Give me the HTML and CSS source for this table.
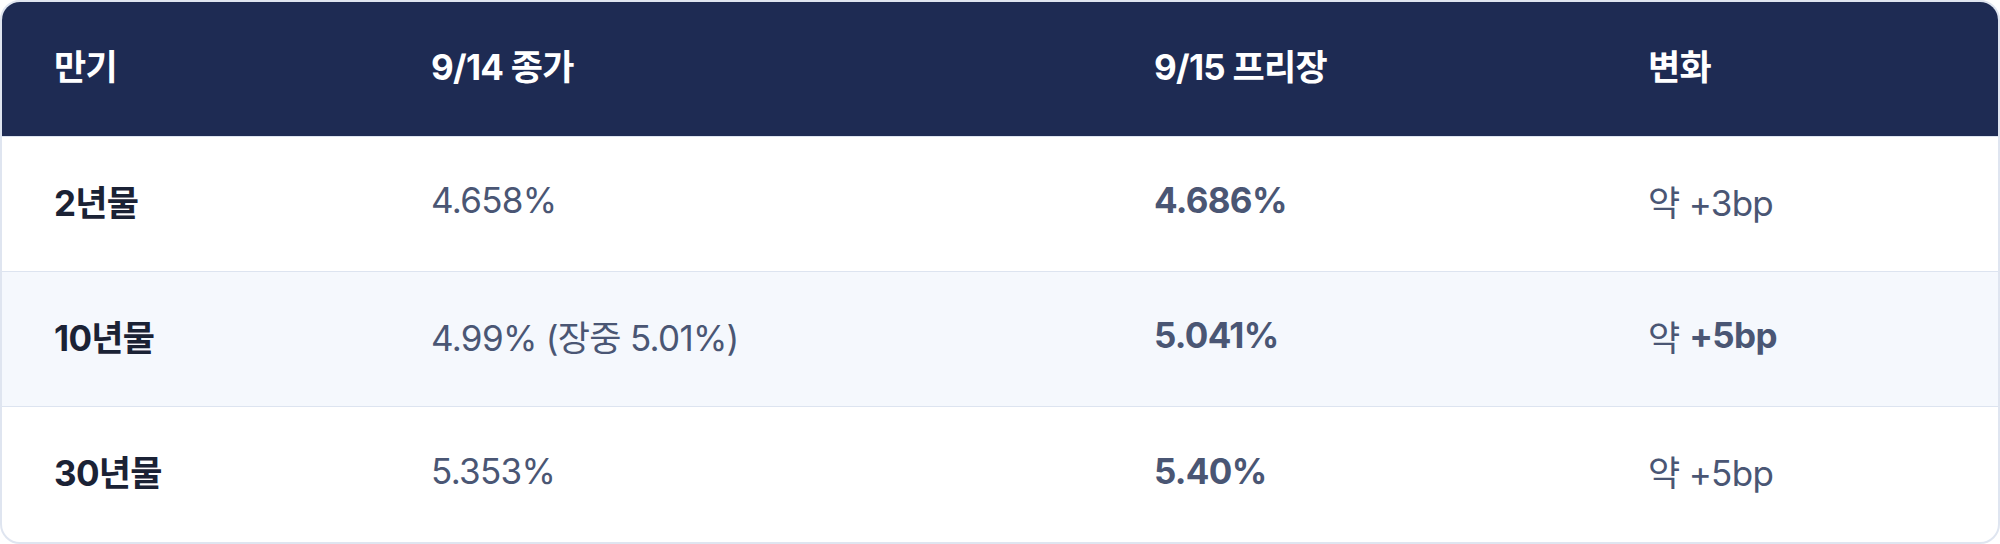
FILE: index.html
```html
<!DOCTYPE html>
<html lang="ko">
<head>
<meta charset="utf-8">
<title>국채 금리</title>
<link rel="stylesheet" href="styles.css">
</head>
<body>
<div class="table">
  <div class="row head">
    <div class="cell">만기</div>
    <div class="cell">9/14 종가</div>
    <div class="cell">9/15 프리장</div>
    <div class="cell">변화</div>
  </div>
  <div class="row">
    <div class="cell term">2년물</div>
    <div class="cell">4.658%</div>
    <div class="cell strong">4.686%</div>
    <div class="cell">약 +3bp</div>
  </div>
  <div class="row alt">
    <div class="cell term">10년물</div>
    <div class="cell">4.99% (장중 5.01%)</div>
    <div class="cell strong">5.041%</div>
    <div class="cell">약 <b class="em">+5bp</b></div>
  </div>
  <div class="row last">
    <div class="cell term">30년물</div>
    <div class="cell">5.353%</div>
    <div class="cell strong">5.40%</div>
    <div class="cell">약 +5bp</div>
  </div>
</div>
</body>
</html>
```

FILE: styles.css
```css
* { box-sizing: border-box; }
html, body {
  margin: 0;
  padding: 0;
  background: #ffffff;
}
body {
  font-family: Inter, "Noto Sans CJK KR", sans-serif;
  font-size: 35px;
  letter-spacing: -0.02em;
  color: #4a5674;
}
.table {
  width: 2000px;
  border: 2px solid #dfe5f0;
  border-radius: 20px;
  overflow: hidden;
  background: #ffffff;
}
.row {
  display: grid;
  grid-template-columns: 377px 723px 494px 1fr;
  height: 135px;
  border-top: 1px solid #dde4f0;
}
.row .cell { padding-bottom: 8px; }
.row.head {
  height: 134px;
  border-top: none;
  background: #1e2b53;
  color: #ffffff;
  font-weight: 700;
}
.row.head .cell { padding-bottom: 10px; }
.row.alt { background: #f5f8fd; }
.row.last { height: 136px; }
.cell {
  display: flex;
  align-items: center;
  padding-left: 52px;
  white-space: nowrap;
}
.term {
  font-weight: 700;
  color: #1b2235;
}
.strong {
  font-weight: 700;
}
.em {
  font-weight: 700;
  margin-left: 0.28em;
}
```
